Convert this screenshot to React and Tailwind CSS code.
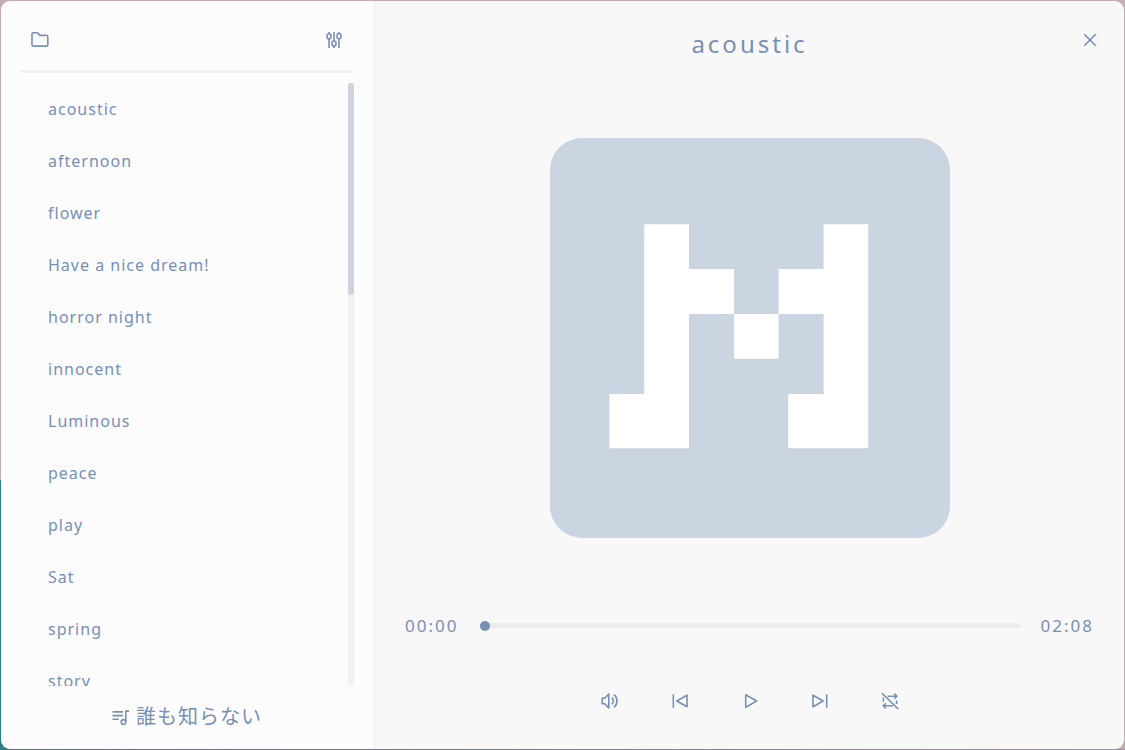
import React, { useState } from "react";

const TRACKS = [
  "acoustic",
  "afternoon",
  "flower",
  "Have a nice dream!",
  "horror night",
  "innocent",
  "Luminous",
  "peace",
  "play",
  "Sat",
  "spring",
  "story",
];

function Icon({ children }) {
  return (
    <svg
      viewBox="0 0 20 20"
      className="size-5 shrink-0"
      fill="none"
      stroke="currentColor"
      strokeWidth="1.6"
      strokeLinejoin="round"
      aria-hidden="true"
    >
      {children}
    </svg>
  );
}

function IconButton({ label, children }) {
  return (
    <button type="button" aria-label={label} className="flex size-5 items-center justify-center">
      {children}
    </button>
  );
}

function Sidebar({ current, onSelect }) {
  return (
    <aside className="flex w-[374px] shrink-0 flex-col border-r border-[#ededef] bg-[#fcfcfc] pr-5 pl-[19px]">
      <div className="flex justify-between px-2.5 pt-[29px] pb-5">
        <IconButton label="Open folder">
          <Icon>
            <path d="M2 4.1V14.9a1.2 1.2 0 0 0 1.2 1.2h13.4a1.2 1.2 0 0 0 1.2-1.2V6.6a1.2 1.2 0 0 0-1.2-1.2H9.8L7.9 3.3A1.4 1.4 0 0 0 6.9 2.8H3.2A1.2 1.2 0 0 0 2 4.1Z" />
          </Icon>
        </IconButton>
        <IconButton label="Equalizer">
          <Icon>
            <path d="M5 2v2M5 8.9v9M10 2v9M10 16v2M15 2v2M15 8.9v9" />
            <rect x="3" y="4" width="4" height="4.9" rx="1.6" />
            <rect x="8" y="11" width="4" height="4.9" rx="1.6" />
            <rect x="13" y="3.8" width="4" height="4.9" rx="1.6" />
          </Icon>
        </IconButton>
      </div>
      <div className="h-[3px] rounded-full bg-[#f0f2f2]" />
      <div className="mt-2.5 flex min-h-0 flex-1">
        <ul className="min-w-0 flex-1 overflow-y-auto [scrollbar-width:none]">
          {TRACKS.map((name) => (
            <li key={name}>
              <button
                type="button"
                aria-pressed={name === current}
                onClick={() => onSelect(name)}
                className="flex h-[52px] w-full items-center pl-7 text-left text-base tracking-[1px]"
              >
                {name}
              </button>
            </li>
          ))}
        </ul>
        <div className="w-1.5 rounded-full bg-[#f0f1f1]">
          <div className="h-[212px] rounded-full bg-[#ccd4df]" />
        </div>
      </div>
      <div className="flex h-[63px] items-center justify-center gap-1 pb-0.5 text-xl tracking-[1px]">
        <Icon>
          <path d="M0.5 4.9h10.6M0.5 8.6h10.6M0.5 12.3h6.4M17 4.1h-3.2v10.7" />
          <circle cx="11.5" cy="14.9" r="2.3" />
        </Icon>
        <span>誰も知らない</span>
      </div>
    </aside>
  );
}

function Cover() {
  return (
    <svg viewBox="0 0 400 400" className="size-[400px] rounded-[32px] bg-[#cbd5e1]" fill="#fff" role="img" aria-label="Cover">
      <path d="M94.3 86.3H139V131H184V176H139V310.2H59.4V256H94.3Z" />
      <path d="M184 176H228.6V220.7H184Z" />
      <path d="M273.6 86.3H318.2V310.2H238.2V256H273.6V176H228.6V131H273.6Z" />
    </svg>
  );
}

export default function App() {
  const [current, setCurrent] = useState("acoustic");
  const [position, setPosition] = useState(0);

  return (
    <div className="h-screen bg-[#c3adb5] bg-[linear-gradient(to_right,#2f7f85_0px,#2f7f85_8px,transparent_8px),linear-gradient(to_right,#4d7277,#a88f9f)] bg-[length:100%_270px,100%_1px] bg-[position:bottom,bottom] bg-no-repeat p-px font-['Noto_Sans','Noto_Sans_CJK_JP',sans-serif] text-[#788fb6]">
      <div className="flex h-full overflow-hidden rounded-[9px]">
        <Sidebar current={current} onSelect={setCurrent} />
        <main className="flex min-w-0 flex-1 flex-col bg-[#f8f8f8] pb-7">
          <header className="grid h-[62px] grid-cols-[24px_1fr_24px] px-[22px] pt-[27px]">
            <h1 className="col-start-2 text-center text-2xl tracking-[3px]">{current}</h1>
            <button type="button" aria-label="Close" className="flex size-6 items-center justify-center">
              <Icon>
                <path d="M4.2 4.2l11.6 11.6M15.8 4.2L4.2 15.8" />
              </Icon>
            </button>
          </header>
          <div className="flex min-h-0 flex-1 items-center justify-center">
            <Cover />
          </div>
          <div className="flex h-[25px] items-center gap-5 px-[30px] text-[17px] leading-6 tracking-[2px]">
            <span className="w-[55px]">00:00</span>
            <input
              type="range"
              aria-label="Position"
              min="0"
              max="128"
              value={position}
              onChange={(e) => setPosition(Number(e.target.value))}
              className="h-[5px] min-w-0 flex-1 appearance-none rounded-full bg-[#ebebeb] [&::-webkit-slider-thumb]:size-2.5 [&::-webkit-slider-thumb]:appearance-none [&::-webkit-slider-thumb]:rounded-full [&::-webkit-slider-thumb]:bg-[#788fb6]"
            />
            <span>02:08</span>
          </div>
          <div className="mt-[43px] flex h-10 items-center justify-center gap-[50px]">
            <IconButton label="Volume">
              <Icon>
                <path d="M2.2 7.2h2.6L8.8 3v14l-4-4.2H2.2ZM11.8 6.6a4.5 4.5 0 0 1 0 6.8M14 3.6a8.4 8.4 0 0 1 0 12.8" />
              </Icon>
            </IconButton>
            <IconButton label="Previous">
              <Icon>
                <path d="M3.3 3.2v13.6M17 4.2v11.6L6.8 10Z" />
              </Icon>
            </IconButton>
            <IconButton label="Play">
              <Icon>
                <path d="M5.7 3.8v12.6L16.6 10Z" />
              </Icon>
            </IconButton>
            <IconButton label="Next">
              <Icon>
                <path d="M16.7 3.2v13.6M3 4.2v11.6L13.2 10Z" />
              </Icon>
            </IconButton>
            <IconButton label="Repeat off">
              <Icon>
                <path d="M2 2.2L18.2 18M7.6 5.2H16.8M14.4 2.6L17 5.2L14.4 7.8M16.6 9.4V13M13 14.8H3.2M5.8 12.2L3.2 14.8L5.8 17.4M3.4 10.8V6.6" />
              </Icon>
            </IconButton>
          </div>
        </main>
      </div>
    </div>
  );
}
